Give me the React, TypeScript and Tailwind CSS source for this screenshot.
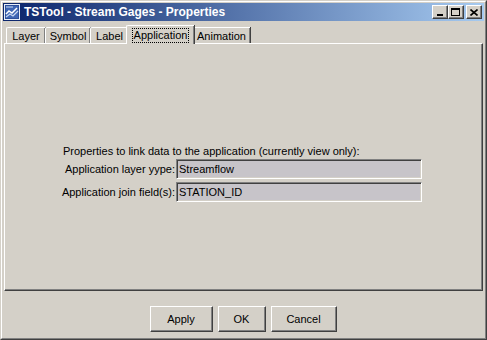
import React from "react";

const font = { fontFamily: '"Liberation Sans", Arial, sans-serif' };

function Tab({ label, w, selected }: { label: string; w: string; selected?: boolean }) {
  if (selected) {
    return (
      <div
        className={`relative z-10 -mx-[2px] h-[19px] ${w} bg-[#d4d0c8] border-l border-t border-white rounded-tl-[2px] flex items-start justify-center pt-[2px] shadow-[inset_-1px_0_0_#808080,1px_0_0_#404040]`}
      >
        <span className="border border-dotted border-black px-[1px] leading-[13px] h-[15px] whitespace-nowrap">{label}</span>
      </div>
    );
  }
  return (
    <div
      className={`mt-[2px] h-[16px] ${w} bg-[#d4d0c8] border-l border-t border-white rounded-tl-[2px] flex items-start justify-center pt-[2px] shadow-[inset_-1px_0_0_#808080,1px_0_0_#404040]`}
    >
      <span className="leading-[13px] whitespace-nowrap">{label}</span>
    </div>
  );
}

function Btn({ label, w }: { label: string; w: string }) {
  return (
    <div
      className={`h-[26px] ${w} bg-[#d4d0c8] border-t border-l border-white border-r border-b border-r-[#404040] border-b-[#404040] shadow-[inset_-1px_-1px_0_#808080] flex items-center justify-center text-[11px] text-black`}
    >
      {label}
    </div>
  );
}

function CapBtn({ children, ml }: { children: React.ReactNode; ml: string }) {
  return (
    <div
      className={`${ml} w-[16px] h-[14px] bg-[#d4d0c8] border-t border-l border-white border-r border-b border-r-[#404040] border-b-[#404040] shadow-[inset_-1px_-1px_0_#808080] flex items-center justify-center`}
    >
      {children}
    </div>
  );
}

function Field({ value }: { value: string }) {
  return (
    <div className="w-[246px] h-[20px] bg-[#c7c4c9] border-t border-l border-t-[#808080] border-l-[#808080] border-b border-r border-white shadow-[inset_1px_1px_0_#404040,inset_-1px_-1px_0_#d4d0c8] flex items-center pl-[2px] text-[11px] text-black">
      {value}
    </div>
  );
}

export default function App() {
  return (
    <div style={font} className="w-[487px] h-[340px] bg-[#d4d0c8] border border-t-[#d4d0c8] border-l-[#d4d0c8] border-r-[#404040] border-b-[#404040] text-[11px] text-black">
      <div className="w-full h-full border border-t-white border-l-white border-r-[#808080] border-b-[#808080] p-[1px] flex flex-col">
        {/* Title bar */}
        <div className="h-[18px] flex items-center bg-[linear-gradient(to_right,#0a246a,#a6caf0)]">
          <svg width="16" height="16" viewBox="0 0 16 16" className="ml-[1px]">
            <rect x="0.5" y="0.5" width="15" height="15" fill="#2d4f9a" stroke="#e8eef8" />
            <rect x="2" y="2" width="12" height="12" fill="#3f66b4" />
            <polyline points="2,10 5,7 8,9 13,4" fill="none" stroke="#ffffff" strokeWidth="1.5" />
            <polyline points="2,13 6,10 9,12 14,7" fill="none" stroke="#c9d8f2" strokeWidth="1.2" />
            <line x1="2" y1="3" x2="9" y2="3" stroke="#c9d8f2" />
          </svg>
          <span className="ml-[4px] text-white font-bold text-[12px] leading-[14px]">TSTool - Stream Gages - Properties</span>
          <div className="ml-auto flex items-center mr-[2px]">
            <CapBtn ml="ml-0">
              <div className="w-[6px] h-[2px] bg-black mt-[6px] -ml-[1px]" />
            </CapBtn>
            <CapBtn ml="ml-0">
              <div className="w-[9px] h-[8px] border border-black border-t-2 -ml-[1px]" />
            </CapBtn>
            <CapBtn ml="ml-[2px]">
              <svg width="8" height="7" viewBox="0 0 8 7" className="-ml-[1px]">
                <path d="M0.5 0.5 L7.5 6.5 M7.5 0.5 L0.5 6.5" stroke="black" strokeWidth="1.6" />
              </svg>
            </CapBtn>
          </div>
        </div>

        {/* Tabs */}
        <div className="mt-[4px] h-[18px] flex items-start pl-[3px]">
          <Tab label="Layer" w="w-[39px]" />
          <Tab label="Symbol" w="w-[45px]" />
          <Tab label="Label" w="w-[38px]" />
          <Tab label="Application" w="w-[68px]" selected />
          <Tab label="Animation" w="w-[58px]" />
        </div>

        {/* Panel */}
        <div className="ml-[1px] w-[479px] h-[248px] border-t border-l border-white border-r border-b border-r-[#404040] border-b-[#404040] shadow-[inset_-1px_-1px_0_#808080] flex flex-col pt-[101px] pl-[58px]">
          <div className="leading-[13px] h-[14px] whitespace-nowrap">Properties to link data to the application (currently view only):</div>
          <div className="flex items-center">
            <div className="w-[113px] flex justify-end pr-[1px]">
              <span className="whitespace-nowrap">Application layer yype:</span>
            </div>
            <Field value="Streamflow" />
          </div>
          <div className="flex items-center mt-[3px]">
            <div className="w-[113px] flex justify-end pr-[1px]">
              <span className="whitespace-nowrap">Application join field(s):</span>
            </div>
            <Field value="STATION_ID" />
          </div>
        </div>

        {/* Buttons */}
        <div className="mt-auto mb-[5px] flex justify-center gap-[5px] pr-[1px]">
          <Btn label="Apply" w="w-[63px]" />
          <Btn label="OK" w="w-[48px]" />
          <Btn label="Cancel" w="w-[66px]" />
        </div>
      </div>
    </div>
  );
}
